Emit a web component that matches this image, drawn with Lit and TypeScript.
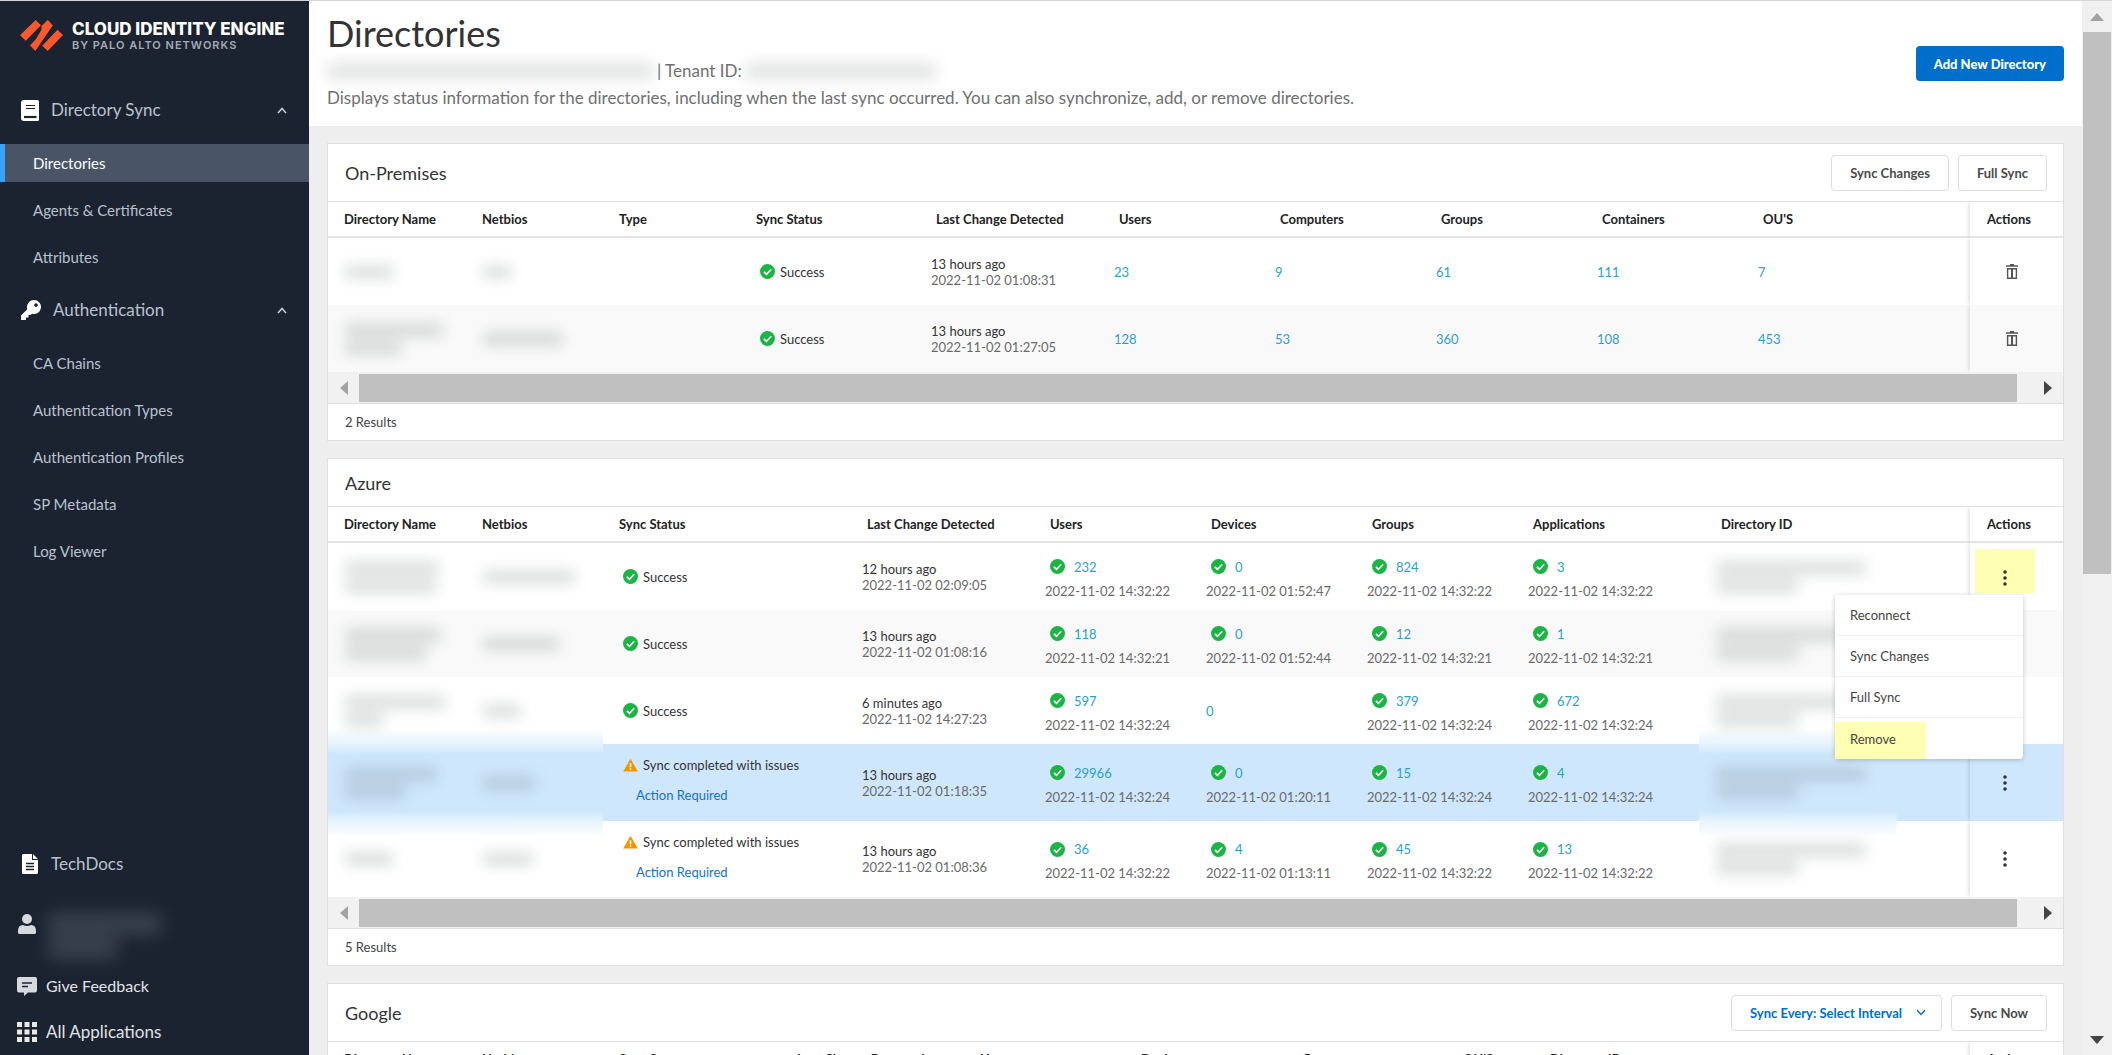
import { LitElement, html, css, svg, nothing } from "lit";
import { customElement } from "lit/decorators.js";
import { classMap } from "lit/directives/class-map.js";

const check = html`<svg class="ico" viewBox="0 0 16 16" width="15" height="15" aria-hidden="true">
  <circle cx="8" cy="8" r="8" fill="#1db446" />
  <path d="M4.2 8.4l2.7 2.7 5-5.6" fill="none" stroke="#fff" stroke-width="1.7" />
</svg>`;

const warn = html`<svg class="ico" viewBox="0 0 16 14" width="15" height="14" aria-hidden="true">
  <path d="M8 0.4 L15.8 13.8 H0.2 Z" fill="#f39400" />
  <path d="M8 5.2v4.2M8 10.4v1.7" stroke="#fff" stroke-width="1.6" fill="none" />
</svg>`;

const trash = html`<svg viewBox="0 0 12 15" width="12" height="15" aria-hidden="true">
  <path d="M0 2h12M4 0.8h4" stroke="#555" stroke-width="1.5" />
  <path d="M1.600 4.800h8.800v9.400H1.600z" stroke="#555" stroke-width="1.400" fill="none" />
  <path d="M6 4.500v9.500" stroke="#555" stroke-width="2" fill="none" />
</svg>`;

const dots = html`<svg viewBox="0 0 4 16" width="4" height="16" aria-hidden="true" fill="#333">
  <circle cx="2" cy="2" r="1.8" /><circle cx="2" cy="8" r="1.8" /><circle cx="2" cy="14" r="1.8" />
</svg>`;

const chevUp = html`<svg viewBox="0 0 10 7" width="10" height="7" aria-hidden="true">
  <path d="M1 6l4-4.5L9 6" fill="none" stroke="#c9d0da" stroke-width="1.5" />
</svg>`;

type Count = { n: string; t?: string };
type AzureRow = {
  bars: number[];
  net: number;
  warning?: boolean;
  ago: string;
  at: string;
  counts: Count[];
  state?: string;
};

const premRows = [
  { bars: [48], net: 28, at: "2022-11-02 01:08:31", counts: ["23", "9", "61", "111", "7"] },
  { bars: [98, 56], net: 80, at: "2022-11-02 01:27:05", counts: ["128", "53", "360", "108", "453"] },
];

const azureRows: AzureRow[] = [
  {
    bars: [94, 92], net: 92, ago: "12 hours ago", at: "2022-11-02 02:09:05", state: "open",
    counts: [
      { n: "232", t: "2022-11-02 14:32:22" },
      { n: "0", t: "2022-11-02 01:52:47" },
      { n: "824", t: "2022-11-02 14:32:22" },
      { n: "3", t: "2022-11-02 14:32:22" },
    ],
  },
  {
    bars: [96, 82], net: 76, ago: "13 hours ago", at: "2022-11-02 01:08:16",
    counts: [
      { n: "118", t: "2022-11-02 14:32:21" },
      { n: "0", t: "2022-11-02 01:52:44" },
      { n: "12", t: "2022-11-02 14:32:21" },
      { n: "1", t: "2022-11-02 14:32:21" },
    ],
  },
  {
    bars: [100, 38], net: 38, ago: "6 minutes ago", at: "2022-11-02 14:27:23", state: "before",
    counts: [
      { n: "597", t: "2022-11-02 14:32:24" },
      { n: "0" },
      { n: "379", t: "2022-11-02 14:32:24" },
      { n: "672", t: "2022-11-02 14:32:24" },
    ],
  },
  {
    bars: [92, 60], net: 52, warning: true, ago: "13 hours ago", at: "2022-11-02 01:18:35", state: "selected",
    counts: [
      { n: "29966", t: "2022-11-02 14:32:24" },
      { n: "0", t: "2022-11-02 01:20:11" },
      { n: "15", t: "2022-11-02 14:32:24" },
      { n: "4", t: "2022-11-02 14:32:24" },
    ],
  },
  {
    bars: [48], net: 50, warning: true, ago: "13 hours ago", at: "2022-11-02 01:08:36", state: "after",
    counts: [
      { n: "36", t: "2022-11-02 14:32:22" },
      { n: "4", t: "2022-11-02 01:13:11" },
      { n: "45", t: "2022-11-02 14:32:22" },
      { n: "13", t: "2022-11-02 14:32:22" },
    ],
  },
];

@customElement("app-root")
export class AppRoot extends LitElement {
  static styles = css`
    :host {
      display: block;
      font-family: Lato, "Open Sans", sans-serif;
      font-size: 13px;
      line-height: 16px;
      color: #333;
    }
    * {
      box-sizing: border-box;
    }
    a {
      text-decoration: none;
      color: inherit;
    }
    button,
    select {
      font: inherit;
      color: inherit;
      background: none;
      border: 0;
      padding: 0;
      margin: 0;
      cursor: pointer;
    }
    ul {
      list-style: none;
      margin: 0;
      padding: 0;
    }
    .shell {
      display: flex;
      height: 100vh;
      overflow: hidden;
      border-top: 1px solid #d4d4d4;
      background: #eee;
    }

    /* sidebar */
    .side {
      flex: 0 0 309px;
      display: flex;
      flex-direction: column;
      background: #1b2230;
      color: #b9c2ce;
      font-size: 15px;
    }
    .brand {
      display: flex;
      align-items: center;
      gap: 9px;
      height: 75px;
      padding: 0 0 6px 20px;
      white-space: nowrap;
    }
    .brand-name {
      font: 800 17px/18px Inter, sans-serif;
      color: #fff;
    }
    .brand-sub {
      font: 600 11px/14px Inter, sans-serif;
      letter-spacing: 1px;
      color: #a5abb5;
    }
    .group {
      display: flex;
      align-items: center;
      gap: 12px;
      width: 100%;
      height: 68px;
      padding: 0 22px 0 21px;
      font-size: 17px;
    }
    .group span {
      flex: 1;
      text-align: left;
    }
    .items {
      display: flex;
      flex-direction: column;
      gap: 9px;
    }
    .item {
      display: block;
      line-height: 38px;
      padding-left: 33px;
    }
    .item.active {
      background: #495567;
      color: #fff;
      padding-left: 28px;
      border-left: 5px solid #38a3ff;
    }
    .foot {
      margin-top: auto;
      display: flex;
      flex-direction: column;
      color: #e0e3e8;
      font-size: 17px;
    }
    .foot a {
      display: flex;
      align-items: center;
      gap: 9px;
      height: 46px;
      padding-left: 17px;
    }
    .foot .docs {
      gap: 12px;
      padding-left: 21px;
      color: #b9c2ce;
    }
    .foot .feedback {
      font-size: 16px;
    }
    .user {
      display: flex;
      gap: 12px;
      height: 76px;
      padding: 27px 0 0 18px;
    }

    /* blurred values */
    .smudges {
      display: flex;
      flex-direction: column;
      gap: 4px;
    }
    .smudge {
      height: 14px;
      border-radius: 4px;
      background: rgba(70, 80, 80, 0.19);
      filter: blur(7px);
    }
    .user .smudge {
      height: 20px;
      background: rgba(200, 210, 220, 0.2);
      filter: blur(9px);
    }

    /* page */
    .page {
      flex: 1;
      min-width: 0;
      overflow: hidden;
    }
    .head {
      display: flex;
      justify-content: space-between;
      height: 125px;
      padding: 9px 18px 0;
      background: #fff;
    }
    h1 {
      margin: 0;
      font-size: 36px;
      line-height: 47px;
      font-weight: 400;
    }
    .lead {
      margin: 0;
      font-size: 17px;
      line-height: 27px;
      color: #707070;
    }
    .tenant {
      display: flex;
      align-items: center;
      gap: 4px;
    }
    .tenant .smudge {
      height: 18px;
      width: 326px;
      background: rgba(70, 80, 80, 0.14);
    }
    .tenant .short {
      width: 190px;
    }
    .primary {
      align-self: flex-start;
      margin-top: 36px;
      height: 35px;
      padding: 0 18px;
      border-radius: 4px;
      background: #006fcc;
      color: #fff;
      font-weight: 900;
    }
    .cards {
      display: flex;
      flex-direction: column;
      gap: 17px;
      padding: 17px 18px;
    }
    .card {
      background: #fff;
      border: 1px solid #e0e0e0;
    }
    .card-head {
      display: flex;
      align-items: center;
      justify-content: space-between;
      height: 57px;
      padding: 0 16px 0 17px;
    }
    .card-head.slim {
      height: 47px;
    }
    h2 {
      margin: 0;
      font-size: 18px;
      font-weight: 400;
    }
    .tools {
      display: flex;
      gap: 9px;
    }
    .btn {
      height: 36px;
      padding: 0 18px;
      border: 1px solid #ddd;
      border-radius: 4px;
      background: #fff;
      font-weight: 700;
      color: #4a4a4a;
    }
    .pick {
      position: relative;
      display: flex;
      color: #006fcc;
    }
    .pick select {
      appearance: none;
      padding-right: 38px;
      color: #006fcc;
    }
    .pick svg {
      position: absolute;
      right: 16px;
      top: 14px;
      pointer-events: none;
    }
    table {
      width: 100%;
      table-layout: fixed;
      border-collapse: separate;
      border-spacing: 0;
      border-top: 1px solid #e0e0e0;
    }
    th {
      height: 36px;
      padding: 0 0 0 16px;
      border-bottom: 2px solid #e4e4e4;
      text-align: left;
      font-weight: 700;
      color: #222;
      white-space: nowrap;
    }
    .shift {
      padding-left: 22px;
    }
    td {
      height: 67px;
      padding: 0 0 0 17px;
      white-space: nowrap;
    }
    .w-name {
      width: 138px;
    }
    .w-type {
      width: 137px;
    }
    .w-status {
      width: 174px;
    }
    .w-azure {
      width: 242px;
    }
    .w-google {
      width: 172px;
    }
    .w-change {
      width: 183px;
    }
    .w-count {
      width: 161px;
    }
    .w-apps {
      width: 188px;
    }
    .w-ou {
      width: 87px;
    }
    .w-act {
      width: 93px;
    }
    .stripe td {
      background: #f9f9f9;
    }
    .act {
      position: relative;
      box-shadow: -3px 0 3px -1px rgba(0, 0, 0, 0.1);
      clip-path: inset(0 0 0 -8px);
    }
    th.act {
      padding-left: 17px;
    }
    td.act {
      padding-left: 0;
    }
    .iconbtn {
      display: grid;
      place-items: center;
      width: 60px;
      height: 44px;
      margin-left: 5px;
    }
    .iconbtn.bin {
      margin-left: 12px;
    }
    .open .act {
      z-index: 2;
      clip-path: none;
    }
    .open .iconbtn {
      background: #ffffb3;
      padding-top: 14px;
      margin-top: -12px;
    }
    .selected td {
      height: 77px;
      background-color: #cfe7fd;
    }
    .after td {
      height: 76px;
    }
    .before .soft {
      background: linear-gradient(to top, #e6f3fe, rgba(230, 243, 254, 0) 16px) 0 0 / 198px 100% no-repeat;
    }
    .after .soft {
      background: linear-gradient(#e6f3fe, rgba(230, 243, 254, 0) 16px) 0 0 / 198px 100% no-repeat;
    }
    .selected .soft {
      background: linear-gradient(#e6f3fe, #cfe7fd 10px, #cfe7fd 67px, #e6f3fe) 0 0 / 198px 100% no-repeat
        #cfe7fd;
    }
    .status {
      display: flex;
      align-items: center;
      gap: 5px;
      padding-left: 3px;
      line-height: 18px;
    }
    td.issues {
      padding-bottom: 5px;
    }
    .required {
      display: block;
      margin-top: 12px;
      padding-left: 16px;
      line-height: 18px;
      color: #1271d4;
    }
    .date {
      color: #6a6a6a;
    }
    .num {
      color: #2a9fd0;
    }
    .stat {
      display: flex;
      align-items: center;
      gap: 9px;
      padding-left: 5px;
      line-height: 24px;
    }
    .stat + .date {
      line-height: 24px;
    }
    td.count {
      padding-top: 4px;
    }
    td.count.plain {
      padding-top: 0;
    }
    .menu {
      position: absolute;
      top: 52px;
      right: 40px;
      width: 188px;
      background: #fff;
      border-radius: 0 0 4px 4px;
      box-shadow: 0 1px 5px rgba(0, 0, 0, 0.22);
    }
    .menu button {
      display: block;
      width: 100%;
      height: 41px;
      padding-left: 15px;
      text-align: left;
      border-bottom: 1px solid #f0f0f0;
      color: #444;
    }
    .menu li:last-child button {
      border-bottom: 0;
      background: linear-gradient(#ffffb3, #ffffb3) 0 4px / 91px 37px no-repeat;
    }
    .hbar {
      display: flex;
      align-items: center;
      height: 32px;
      background: #f1f1f1;
      border-bottom: 1px solid #ddd;
    }
    .hbar svg,
    .vbar svg {
      flex: none;
    }
    .hthumb {
      flex: 1;
      height: 28px;
      background: #c0c0c0;
    }
    .hend {
      flex: 0 0 31px;
      display: grid;
      place-items: center;
    }
    .hend.far {
      flex-basis: 46px;
      padding-left: 16px;
    }
    .results {
      line-height: 36px;
      padding-left: 17px;
      color: #444;
    }
    .vbar {
      flex: 0 0 30px;
      display: grid;
      grid-template-rows: 31px 12fr 10fr 30px;
      background: #f0f0f0;
      justify-items: center;
      align-items: center;
      padding: 0 1px;
    }
    .vthumb {
      width: 100%;
      height: 100%;
      background: #c0c0c0;
    }
    .vend {
      grid-row: 4;
    }
  `;

  private smudges(widths: number[]) {
    return html`<div class="smudges" aria-hidden="true">
      ${widths.map((w) => html`<div class="smudge" style="width:${w}px"></div>`)}
    </div>`;
  }

  private head(labels: string[], plain: number) {
    return html`<thead>
      <tr>
        ${labels.map((l, i) => html`<th scope="col" class=${classMap({ shift: i >= plain })}>${l}</th>`)}
        <th scope="col" class="act">Actions</th>
      </tr>
    </thead>`;
  }

  private cols(names: string[]) {
    return html`<colgroup>
      ${names.map((n) => html`<col class=${n} />`)}
    </colgroup>`;
  }

  private footer(count: number) {
    return html`<div class="hbar" aria-hidden="true">
        <div class="hend"><svg width="8" height="14" viewBox="0 0 8 14"><path d="M8 0v14L0 7z" fill="#a3a3a3" /></svg></div>
        <div class="hthumb"></div>
        <div class="hend far"><svg width="8" height="14" viewBox="0 0 8 14"><path d="M0 0v14L8 7z" fill="#444" /></svg></div>
      </div>
      <div class="results">${count} Results</div>`;
  }

  private azureRow(r: AzureRow, i: number) {
    return html`<tr class="${i === 1 ? "stripe" : ""} ${r.state ?? ""}">
      <td class="soft">${this.smudges(r.bars)}</td>
      <td class="soft">${this.smudges([r.net])}</td>
      <td class=${classMap({ issues: !!r.warning })}>
        <div class="status">${r.warning ? warn : check}<span>${r.warning ? "Sync completed with issues" : "Success"}</span></div>
        ${r.warning ? html`<a class="required" href="#action">Action Required</a>` : nothing}
      </td>
      <td>
        <div>${r.ago}</div>
        <div class="date">${r.at}</div>
      </td>
      ${r.counts.map((c) =>
        c.t
          ? html`<td class="count">
              <div class="stat">${check}<a class="num" href="#count">${c.n}</a></div>
              <div class="date">${c.t}</div>
            </td>`
          : html`<td class="count plain"><a class="num" href="#count">${c.n}</a></td>`
      )}
      <td class="soft">${this.smudges(i === 0 || i > 2 ? [150, 82] : [130, 82])}</td>
      <td class="act">
        ${i === 1 || i === 2
          ? nothing
          : html`<button class="iconbtn" aria-label="Row actions">${dots}</button>`}
        ${r.state === "open"
          ? html`<ul class="menu">
              ${["Reconnect", "Sync Changes", "Full Sync", "Remove"].map((m) => html`<li><button>${m}</button></li>`)}
            </ul>`
          : nothing}
      </td>
    </tr>`;
  }

  private sidebar() {
    return html`<nav class="side">
      <div class="brand">
        <svg width="43" height="31" viewBox="0 0 43 31" aria-hidden="true" fill="#fa582d">
          <path d="M0 15.300L15.700 0l5.300 5.300L5.800 20.800z" />
          <path d="M27.700 0l5.200 5.200L15.300 31l-5.300-5.500L16 19l5.500-9.500V6z" />
          <path d="M37.500 9.800l5.500 5.300L27.700 31l-5.500-5.300z" />
        </svg>
        <div>
          <div class="brand-name">CLOUD IDENTITY ENGINE</div>
          <div class="brand-sub">BY PALO ALTO NETWORKS</div>
        </div>
      </div>
      <button class="group" aria-expanded="true">
        <svg width="18" height="21" viewBox="0 0 18 21" aria-hidden="true">
          <path d="M3 0h13.500q1.500 0 1.500 1.500v18q0 1.500-1.500 1.500H3q-3 0-3-3V3q0-3 3-3z" fill="#fff" />
          <path d="M5 5.500h9M5 8.500h9" stroke="#1b2230" stroke-width="1.200" />
          <path d="M3 17h12.500" stroke="#1b2230" stroke-width="2.200" />
        </svg>
        <span>Directory Sync</span>${chevUp}
      </button>
      <div class="items">
        <a class="item active" href="#directories">Directories</a>
        <a class="item" href="#agents">Agents &amp; Certificates</a>
        <a class="item" href="#attributes">Attributes</a>
      </div>
      <button class="group" aria-expanded="true">
        <svg width="20" height="20" viewBox="0 0 20 20" aria-hidden="true">
          <path fill-rule="evenodd" fill="#fff" d="M13 0a7 7 0 1 1-2 13.700L9.500 15H7.500v2.500H5V20H0v-4.500l6.300-6.300A7 7 0 0 1 13 0zM15 3.300a1.800 1.800 0 1 0 .01 0z" />
        </svg>
        <span>Authentication</span>${chevUp}
      </button>
      <div class="items">
        ${["CA Chains", "Authentication Types", "Authentication Profiles", "SP Metadata", "Log Viewer"].map(
          (t) => html`<a class="item" href="#nav">${t}</a>`
        )}
      </div>
      <div class="foot">
        <a class="docs" href="#docs">
          <svg width="18" height="20" viewBox="0 0 18 20" aria-hidden="true">
            <path d="M1 1.500Q1 0 2.500 0H11v6h6v12.500q0 1.500-1.500 1.500h-13Q1 20 1 18.500zM12 0l5 5h-5z" fill="#fff" />
            <path d="M5 9.500h8M5 12.500h8M5 15.500h8" stroke="#1b2230" stroke-width="1.500" />
          </svg>
          TechDocs
        </a>
        <div class="user">
          <svg width="18" height="20" viewBox="0 0 18 20" aria-hidden="true" fill="#d6d9dd">
            <circle cx="9" cy="5" r="5" />
            <path d="M0 17q0-6 5-6q4 2 8 0q5 0 5 6v1.500Q18 20 16.500 20h-15Q0 20 0 18.500z" />
          </svg>
          ${this.smudges([114, 70])}
        </div>
        <a class="feedback" href="#feedback">
          <svg width="20" height="19" viewBox="0 0 20 19" aria-hidden="true">
            <path d="M2 0h16q2 0 2 2v11.500q0 2-2 2h-7l-4 3.500v-3.500H2q-2 0-2-2V2q0-2 2-2z" fill="#d6d9dd" />
            <path d="M5 6h10M5 9.500h6" stroke="#1b2230" stroke-width="1.300" />
          </svg>
          Give Feedback
        </a>
        <a href="#apps">
          <svg width="20" height="20" viewBox="0 0 20 20" aria-hidden="true" fill="#e8e8e8">
            ${[0, 7.5, 15].map((y) => [0, 7.5, 15].map((x) => svg`<rect x=${x} y=${y} width="5" height="5" />`))}
          </svg>
          All Applications
        </a>
      </div>
    </nav>`;
  }

  render() {
    return html`<div class="shell">
      ${this.sidebar()}
      <main class="page">
        <header class="head">
          <div>
            <h1>Directories</h1>
            <p class="lead tenant">
              <i class="smudge" aria-hidden="true"></i><span>| Tenant ID:</span><i class="smudge short" aria-hidden="true"></i>
            </p>
            <p class="lead">
              Displays status information for the directories, including when the last sync occurred. You can also
              synchronize, add, or remove directories.
            </p>
          </div>
          <button class="primary">Add New Directory</button>
        </header>
        <div class="cards">
          <section class="card">
            <div class="card-head">
              <h2>On-Premises</h2>
              <div class="tools"><button class="btn">Sync Changes</button><button class="btn">Full Sync</button></div>
            </div>
            <table>
              ${this.cols(["w-name", "w-type", "w-type", "w-status", "w-change", "w-count", "w-count", "w-count", "w-count", "", "w-act"])}
              ${this.head(
                ["Directory Name", "Netbios", "Type", "Sync Status", "Last Change Detected", "Users", "Computers", "Groups", "Containers", "OU'S"],
                4
              )}
              <tbody>
                ${premRows.map(
                  (r, i) => html`<tr class=${classMap({ stripe: i === 1 })}>
                    <td>${this.smudges(r.bars)}</td>
                    <td>${this.smudges([r.net])}</td>
                    <td></td>
                    <td><div class="status">${check}<span>Success</span></div></td>
                    <td>
                      <div>13 hours ago</div>
                      <div class="date">${r.at}</div>
                    </td>
                    ${r.counts.map((c) => html`<td><a class="num" href="#count">${c}</a></td>`)}
                    <td class="act"><button class="iconbtn bin" aria-label="Remove directory">${trash}</button></td>
                  </tr>`
                )}
              </tbody>
            </table>
            ${this.footer(2)}
          </section>

          <section class="card">
            <div class="card-head slim"><h2>Azure</h2></div>
            <table>
              ${this.cols(["w-name", "w-type", "w-azure", "w-change", "w-count", "w-count", "w-count", "w-apps", "", "w-act"])}
              ${this.head(
                ["Directory Name", "Netbios", "Sync Status", "Last Change Detected", "Users", "Devices", "Groups", "Applications", "Directory ID"],
                3
              )}
              <tbody>
                ${azureRows.map((r, i) => this.azureRow(r, i))}
              </tbody>
            </table>
            ${this.footer(5)}
          </section>

          <section class="card">
            <div class="card-head">
              <h2>Google</h2>
              <div class="tools">
                <div class="pick">
                  <select class="btn" aria-label="Sync interval">
                    <option>Sync Every: Select Interval</option>
                  </select>
                  <svg width="10" height="7" viewBox="0 0 10 7" aria-hidden="true">
                    <path d="M1 1l4 4.500L9 1" fill="none" stroke="currentColor" stroke-width="1.300" />
                  </svg>
                </div>
                <button class="btn">Sync Now</button>
              </div>
            </div>
            <table>
              ${this.cols(["w-name", "w-type", "w-google", "w-change", "w-count", "w-count", "w-count", "w-ou", "", "w-act"])}
              ${this.head(
                ["Directory Name", "Netbios", "Sync Status", "Last Change Detected", "Users", "Devices", "Groups", "OU'S", "Directory ID"],
                3
              )}
            </table>
          </section>
        </div>
      </main>
      <div class="vbar" aria-hidden="true">
        <svg width="14" height="8" viewBox="0 0 14 8"><path d="M0 8h14L7 0z" fill="#a3a3a3" /></svg>
        <div class="vthumb"></div>
        <svg class="vend" width="14" height="8" viewBox="0 0 14 8"><path d="M0 0h14L7 8z" fill="#444" /></svg>
      </div>
    </div>`;
  }
}
